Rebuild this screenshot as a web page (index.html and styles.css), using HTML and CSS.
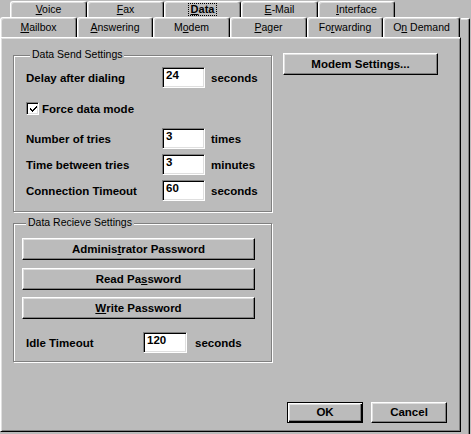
FILE: index.html
```html
<!DOCTYPE html>
<html>
<head>
<meta charset="utf-8">
<link rel="stylesheet" href="styles.css">
</head>
<body>
<div class="dialog">
  <div class="tabrow tabrow-back">
    <div class="tab"><span><u>V</u>oice</span></div>
    <div class="tab"><span><u>F</u>ax</span></div>
    <div class="tab tab-current"><span class="focus"><u>D</u>ata</span></div>
    <div class="tab"><span><u>E</u>-Mail</span></div>
    <div class="tab"><span><u>I</u>nterface</span></div>
  </div>
  <div class="main-row">
    <div class="front">
      <div class="tabrow tabrow-front">
        <div class="tab w77"><span><u>M</u>ailbox</span></div>
        <div class="tab w76"><span><u>A</u>nswering</span></div>
        <div class="tab w77"><span>M<u>o</u>dem</span></div>
        <div class="tab w77"><span><u>P</u>ager</span></div>
        <div class="tab w76"><span>Fo<u>r</u>warding</span></div>
        <div class="tab w77"><span>O<u>n</u> Demand</span></div>
      </div>
      <div class="panel">
        <div class="panel-body">
          <div class="groups">
            <div class="group group-send">
              <div class="legend">Data Send Settings</div>
              <div class="field f-delay">
                <div class="label">Delay after dialing</div>
                <div class="input">24</div>
                <div class="unit">seconds</div>
              </div>
              <div class="check-row">
                <div class="checkbox">
                  <svg width="9" height="9" viewBox="0 0 9 9"><path d="M1 3h1v1h1v1h1V4h1V3h1V2h1V1h1v2H7v1H6v1H5v1H4v1H3V6H2V5H1z" fill="#000"/></svg>
                </div>
                <div class="label">Force data mode</div>
              </div>
              <div class="field f-tries">
                <div class="label">Number of tries</div>
                <div class="input">3</div>
                <div class="unit">times</div>
              </div>
              <div class="field f-gap">
                <div class="label">Time between tries</div>
                <div class="input">3</div>
                <div class="unit">minutes</div>
              </div>
              <div class="field f-gap">
                <div class="label">Connection Timeout</div>
                <div class="input">60</div>
                <div class="unit">seconds</div>
              </div>
            </div>
            <div class="group group-recv">
              <div class="legend">Data Recieve Settings</div>
              <div class="btn wide b-admin">Adminis<u>t</u>rator Password</div>
              <div class="btn wide b-read">Read Pa<u>s</u>sword</div>
              <div class="btn wide b-write"><u>W</u>rite Password</div>
              <div class="field f-idle">
                <div class="label">Idle Timeout</div>
                <div class="input">120</div>
                <div class="unit">seconds</div>
              </div>
            </div>
          </div>
          <div class="side">
            <div class="btn modem">Modem Settin<u>g</u>s...</div>
          </div>
        </div>
        <div class="footer">
          <div class="btn small default">OK</div>
          <div class="btn small">Cancel</div>
        </div>
      </div>
    </div>
    <div class="edge"></div>
  </div>
</div>
</body>
</html>
```
FILE: styles.css
```css
* { box-sizing: border-box; }
html, body { margin: 0; padding: 0; }
body {
  background: #bbbbbb;
  font-family: "Liberation Sans", Arial, sans-serif;
  color: #000;
}
u { text-decoration: underline; text-underline-offset: 1px; }

.dialog {
  width: 471px;
  height: 434px;
  overflow: hidden;
  display: flex;
  flex-direction: column;
}

/* ---------- tabs ---------- */
.tabrow { display: flex; }
.tabrow-back { height: 17px; padding-left: 10px; }
.tabrow-front { height: 20px; }

.tab {
  display: flex;
  align-items: center;
  justify-content: center;
  font-size: 10.5px;
  line-height: 12px;
  border-top: 1px solid #fff;
  border-left: 1px solid #fff;
  border-right: 1px solid #000;
  border-radius: 3px 3px 0 0;
  box-shadow: inset -1px 0 0 #808080, inset 1px 1px 0 #dfdfdf;
  padding-bottom: 2px;
}
.tabrow-back .tab { width: 77px; height: 16px; margin-top: 1px; padding-bottom: 1px; }
.tabrow-front .tab { height: 20px; }
.w77 { width: 77px; }
.w76 { width: 76px; }

.tab-current { font-weight: bold; font-size: 11px; }
.focus {
  border: 1px dotted #000;
  padding: 0 2px;
  line-height: 11px;
}

/* ---------- main area ---------- */
.main-row { display: flex; flex: 1; }
.front { width: 461px; display: flex; flex-direction: column; }
.edge {
  width: 9px;
  margin-top: 1px;
  border-top: 1px solid #fff;
  border-right: 1px solid #000;
  border-radius: 0 2px 0 0;
  box-shadow: inset -1px 0 0 #808080, inset 0 1px 0 #dfdfdf;
}

.panel {
  height: 395px;
  border: 1px solid;
  border-color: #fff #000 #000 #fff;
  box-shadow: inset 1px 1px 0 #dfdfdf, inset -1px -1px 0 #808080;
  display: flex;
  flex-direction: column;
  padding: 0 13px 8px 12px;
}
.panel-body { display: flex; flex: 1; }
.groups { width: 259px; padding-top: 17px; display: flex; flex-direction: column; }
.side { margin-left: 11px; padding-top: 15px; }

/* ---------- group boxes ---------- */
.group {
  border: 1px solid #808080;
  box-shadow: 1px 1px 0 #fff, inset 1px 1px 0 #fff;
  display: flex;
  flex-direction: column;
}
.legend {
  align-self: flex-start;
  margin: -8px 0 0 4px;
  padding: 0 2px;
  background: #bbbbbb;
  font-size: 10.5px;
  line-height: 13px;
}
.group-send { padding: 0 0 10px 12px; }
.group-recv { margin-top: 11px; padding: 0 0 8px 8px; }

.label { font-weight: bold; font-size: 11.5px; }
.unit { font-weight: bold; font-size: 11.5px; margin-left: 6px; }

.field { display: flex; align-items: center; height: 21px; }
.field .label { width: 136px; }
.f-delay { margin-top: 6px; }
.f-tries { margin-top: 9px; }
.f-gap { margin-top: 5px; }
.f-idle { margin-top: 13px; padding-left: 4px; }
.f-idle .label { width: 117px; }
.f-idle .input { width: 44px; }
.f-idle .unit { margin-left: 8px; }

.input {
  width: 43px;
  height: 21px;
  background: #fff;
  border: 1px solid;
  border-color: #808080 #fff #fff #808080;
  box-shadow: inset 1px 1px 0 #000, inset -1px -1px 0 #dfdfdf;
  font-weight: bold;
  font-size: 11.5px;
  line-height: 12px;
  padding: 1px 0 0 3px;
  align-self: center;
}

.check-row { display: flex; align-items: center; height: 21px; margin-top: 10px; }
.checkbox {
  width: 13px;
  height: 13px;
  background: #fff;
  border: 1px solid;
  border-color: #808080 #fff #fff #808080;
  box-shadow: inset 1px 1px 0 #000, inset -1px -1px 0 #dfdfdf;
  display: flex;
  align-items: center;
  justify-content: center;
  margin-right: 3px;
}
.checkbox svg { display: block; margin-top: 1px; margin-left: 1px; }

/* ---------- buttons ---------- */
.btn {
  display: flex;
  align-items: center;
  justify-content: center;
  font-weight: bold;
  font-size: 11.5px;
  border: 1px solid;
  border-color: #fff #000 #000 #fff;
  box-shadow: inset -1px -1px 0 #808080, inset 1px 1px 0 #dfdfdf;
  padding-bottom: 1px;
}
.wide { width: 233px; height: 22px; }
.b-admin { margin-top: 9px; }
.b-read { margin-top: 8px; }
.b-write { margin-top: 7px; }
.modem { width: 155px; height: 22px; }

.footer { display: flex; justify-content: flex-end; gap: 8px; }
.small { width: 76px; height: 21px; }
.default {
  border-color: #000;
  box-shadow: inset 1px 1px 0 #fff, inset -1px -1px 0 #000, inset -2px -2px 0 #808080, inset 2px 2px 0 #dfdfdf;
}
```
